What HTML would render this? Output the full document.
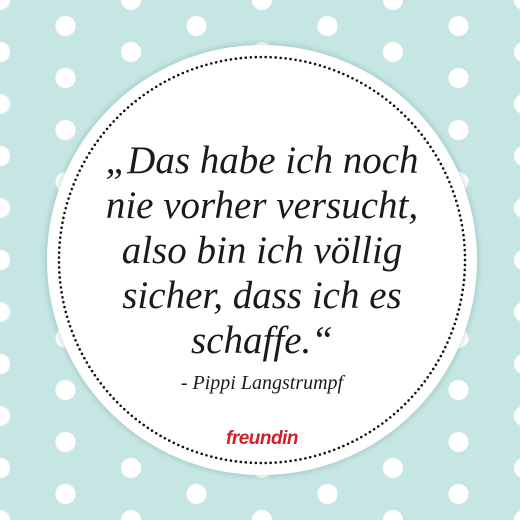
<!DOCTYPE html>
<html><head><style>
html,body{margin:0;padding:0}
body{width:520px;height:520px;overflow:hidden;position:relative;
background-color:#c6e6e3;
background-image:radial-gradient(circle,#fff 9.5px,transparent 10.5px),radial-gradient(circle,#fff 9.5px,transparent 10.5px);
background-size:131px 52px;
background-position:-65.5px -26px,0px 0px;}
.c{position:absolute;left:47px;top:45px;width:430px;height:430px;border-radius:50%;background:#fff;box-shadow:0 0 5px 2px rgba(80,140,135,.25)}
svg{position:absolute;left:0;top:0}
.q{position:absolute;left:60px;width:404px;top:138px;text-align:center;font-family:"Liberation Serif",serif;font-style:italic;font-size:39px;line-height:45px;color:#1a1a1a}
.a{position:absolute;left:60px;width:404px;top:372px;text-align:center;font-family:"Liberation Serif",serif;font-style:italic;font-size:20px;color:#1a1a1a}
.l{position:absolute;left:60px;width:404px;top:428px;text-align:center;font-family:"Liberation Sans",sans-serif;font-weight:bold;font-style:italic;font-size:19px;color:#d0202a;letter-spacing:-0.5px}
</style></head><body>
<div class="c"></div>
<svg width="520" height="520"><circle cx="262" cy="260" r="203" fill="none" stroke="#111" stroke-width="2.6" stroke-linecap="round" stroke-dasharray="0 5"/></svg>
<div class="q">„Das habe ich noch<br>nie vorher versucht,<br>also bin ich völlig<br>sicher, dass ich es<br>schaffe.“</div>
<div class="a">- Pippi Langstrumpf</div>
<div class="l">freundin</div>
</body></html>
